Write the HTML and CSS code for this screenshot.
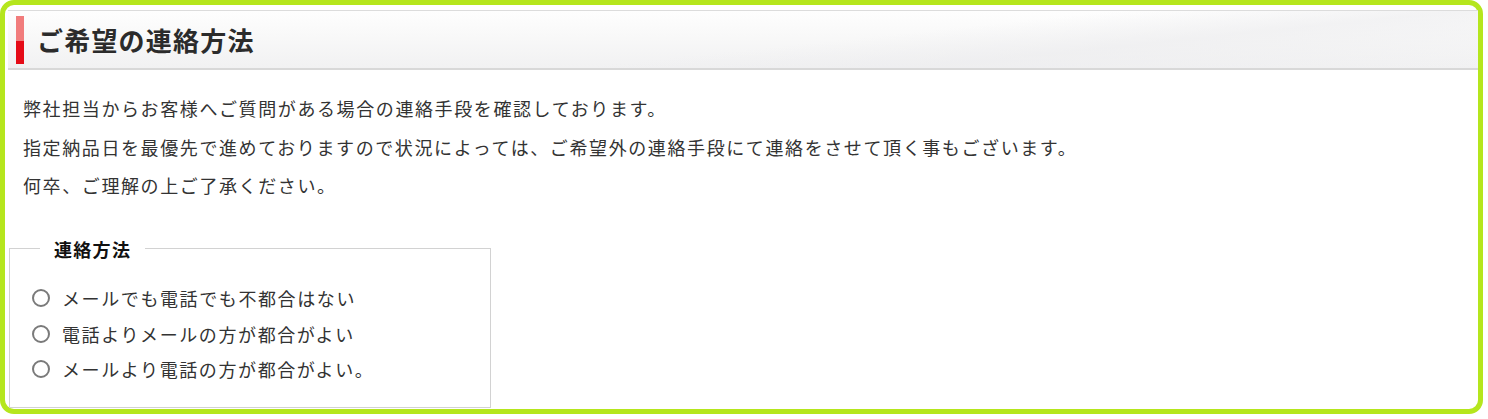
FILE: index.html
```html
<!DOCTYPE html>
<html lang="ja">
<head>
<meta charset="utf-8">
<link rel="stylesheet" href="styles.css">
</head>
<body>
<div class="frame">
  <div class="heading">
    <span class="accent"></span>
    <h2 class="title">ご希望の連絡方法</h2>
  </div>
  <div class="intro">
    <p>弊社担当からお客様へご質問がある場合の連絡手段を確認しております。</p>
    <p>指定納品日を最優先で進めておりますので状況によっては、ご希望外の連絡手段にて連絡をさせて頂く事もございます。</p>
    <p>何卒、ご理解の上ご了承ください。</p>
  </div>
  <fieldset class="methods">
    <legend class="legend">連絡方法</legend>
    <label class="option"><input type="radio" name="m" class="radio"><span>メールでも電話でも不都合はない</span></label>
    <label class="option"><input type="radio" name="m" class="radio"><span>電話よりメールの方が都合がよい</span></label>
    <label class="option"><input type="radio" name="m" class="radio"><span>メールより電話の方が都合がよい。</span></label>
  </fieldset>
</div>
</body>
</html>
```
FILE: styles.css
```css
html, body {
  margin: 0;
  padding: 0;
  background: #fff;
}
body {
  font-family: "Noto Sans CJK JP", "Noto Sans", sans-serif;
  color: #333;
  width: 1488px;
  height: 419px;
  overflow: hidden;
}
.frame {
  box-sizing: border-box;
  width: 1483px;
  height: 414px;
  border: 5px solid #b5e61d;
  border-radius: 14px;
  padding: 5px 0 0 3px;
}
.heading {
  box-sizing: border-box;
  height: 60px;
  border-top: 1px solid #dcdcdc;
  border-bottom: 2px solid #d8d8d8;
  background:
    linear-gradient(174deg, rgba(255,255,255,0) 55%, rgba(236,236,238,0.6) 72%, rgba(236,236,238,0) 100%),
    linear-gradient(to bottom, #fefefe 0%, #f9f9f9 40%, #f1f1f2 100%);
  display: flex;
  align-items: center;
  padding-left: 8px;
}
.accent {
  width: 8px;
  height: 48px;
  background: linear-gradient(to bottom, #f17c7c 0%, #f17c7c 52%, #e50b17 52%, #e50b17 100%);
  margin-right: 13px;
}
.title {
  margin: 0;
  font-size: 26px;
  font-weight: bold;
  letter-spacing: 1.2px;
  color: #2b2b2b;
  line-height: 1;
}
.intro {
  padding: 19px 0 0 15px;
}
.intro p {
  margin: 0;
  font-size: 18px;
  letter-spacing: 1.6px;
  line-height: 38.5px;
}
.methods {
  margin: 31px 0 0 1px;
  width: 482px;
  height: 172px;
  box-sizing: border-box;
  border: 1px solid #d2d2d2;
  border-radius: 0;
  padding: 19px 0 0 22px;
}
.legend {
  font-size: 18px;
  font-weight: bold;
  letter-spacing: 1.3px;
  color: #111;
  padding: 0 14px;
  margin-left: 8px;
}
.option {
  display: flex;
  align-items: center;
  height: 35.5px;
  font-size: 18px;
  letter-spacing: 1.6px;
}
.radio {
  appearance: none;
  -webkit-appearance: none;
  flex: none;
  width: 18px;
  height: 18px;
  border: 2px solid #7a7a7a;
  border-radius: 50%;
  margin: 0 12px 0 0;
  box-sizing: border-box;
  background: #fff;
}
```
